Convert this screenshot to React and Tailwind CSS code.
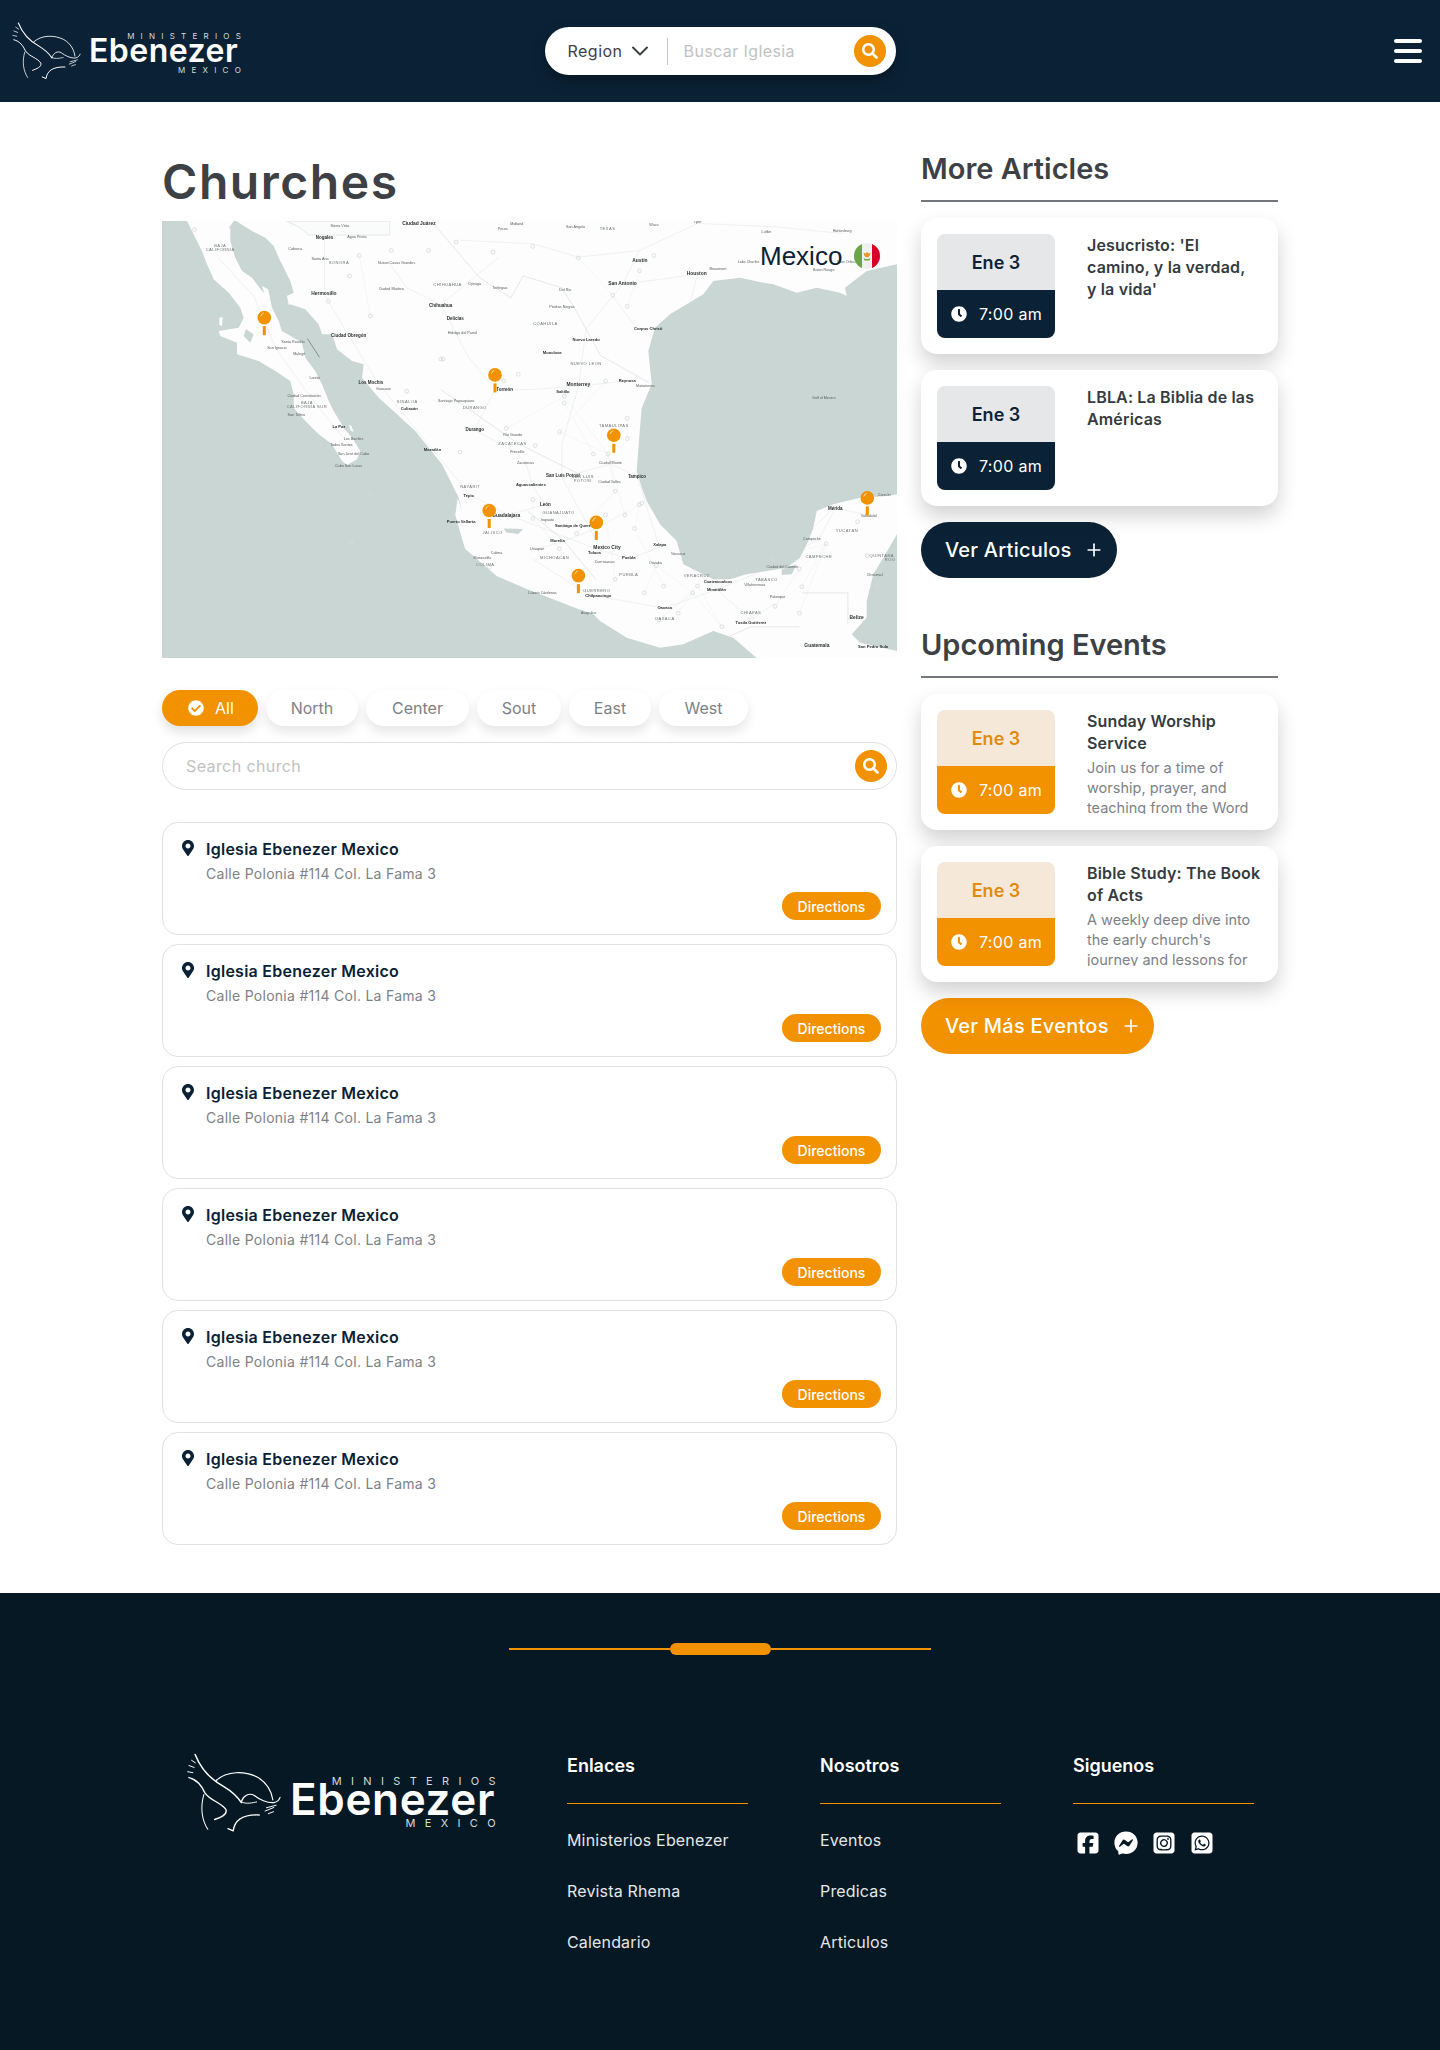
import React from "react";
import { Plus, ChevronDown } from "lucide-react";
import { FaSearch, FaClock, FaCheckCircle, FaMapMarkerAlt } from "react-icons/fa";
import { FaSquareFacebook, FaFacebookMessenger, FaSquareInstagram, FaSquareWhatsapp } from "react-icons/fa6";

const sx = (x) => ((x - 25) / 2.063).toFixed(1);
const sy = (y) => ((y - 243) / 2.95).toFixed(1);
const pts = (a) => a.map(([x, y]) => `${sx(x)},${sy(y)}`).join(" ");
const A = (a) => a.map(([x, y]) => [x / 3, y / 3]);
const B = (a) => a.map(([x, y]) => [438 + x / 3, y / 3]);
const lp = (a) => a.map(([x, y]) => `${x.toFixed(1)},${y.toFixed(1)}`).join(" ");

const baja = A([[75,0],[100,50],[120,90],[135,130],[155,175],[200,215],[235,260],[245,290],[230,320],[170,330],[175,345],[225,365],[225,400],[290,420],[340,450],[385,480],[395,520],[395,560],[430,600],[470,640],[510,670],[540,720],[555,732],[585,715],[595,690],[570,650],[545,620],[515,570],[500,540],[480,490],[460,450],[430,410],[420,365],[360,330],[350,300],[330,260],[325,235],[300,210],[270,170],[240,150],[220,110],[205,60],[205,15],[215,0]]);
const landA = A([[222,0],[270,30],[310,50],[335,75],[350,110],[385,180],[395,215],[375,225],[385,250],[430,265],[470,310],[480,340],[510,340],[525,385],[570,420],[605,430],[600,470],[650,530],[700,575],[760,630],[800,680],[840,730],[890,830],[900,870]]);
const coastMid = [[635,1060],[630,1110],[650,1210],[715,1290],[780,1330],[870,1380]].map(([x, y]) => [(x - 25) / 2.063, (y - 243) / 2.95]);
const coastB = B([[-20,1180],[0,1200],[80,1250],[180,1280],[250,1270],[340,1230],[400,1250],[470,1311],[891,1311],[891,1290],[780,1265],[755,1240],[800,1190],[800,1140],[820,1060],[850,1010],[891,940],[891,820],[860,825],[780,830],[700,850],[650,870],[640,920],[625,960],[600,1010],[560,1040],[500,1050],[440,1060],[390,1075],[340,1075],[290,1050],[250,1030],[230,960],[180,910],[140,840],[125,800],[110,750],[120,620],[125,560],[155,490],[145,390],[165,320],[210,280],[310,220],[340,180],[420,170],[490,185],[520,190],[590,215],[650,200],[720,215],[740,225],[735,200],[800,150],[891,130],[891,0]]);
const land = [...landA, ...coastMid, ...coastB];

const borders = [[[585,250],[680,410],[745,470],[770,405],[850,440],[880,510],[930,640],[1030,720]],[[1345,1340],[1440,1340],[1440,1432]],[[1130,1510],[1240,1440],[1340,1440]],[[780,1100],[850,1180],[920,1300]],[[600,740],[760,900],[900,1000]]];
const roads = [[[360,290],[360,460],[410,580],[470,720],[585,920],[660,1050],[740,1110],[920,1210],[990,1240],[1060,1200],[1170,1330],[1290,1260],[1410,1090]],[[600,490],[630,570],[655,640],[712,740],[790,740],[880,730],[985,715]],[[975,430],[900,560],[885,725],[850,900],[850,1000],[930,1210]],[[1130,400],[975,430],[1010,330],[880,350]],[[712,740],[670,860],[755,925],[775,955],[790,1025],[815,1080],[740,1110]],[[490,360],[530,440],[600,490],[720,350]],[[850,1000],[950,960],[1005,995],[1050,1200]],[[800,1210],[850,1190],[920,1150],[985,1100]],[[1290,1260],[1380,1180],[1415,1090],[1480,1110]],[[140,350],[215,465],[260,620],[330,760],[420,920]],[[790,1240],[905,1345],[1060,1385],[1170,1330],[1240,1420],[1290,1370]],[[1000,560],[1040,560],[1110,510],[1130,400]],[[1010,330],[1130,250],[1290,260],[1430,280]],[[640,300],[790,310],[885,350]],[[955,465],[1005,560]]];
const shields = [[92,268],[168,262],[432,345],[498,330],[575,330],[632,305],[708,335],[790,318],[884,352],[1010,390],[1040,345],[955,462],[985,495],[455,523],[368,480],[412,405],[530,745],[600,650],[730,715],[760,695],[855,760],[940,715],[985,825],[735,855],[845,865],[985,885],[915,930],[945,930],[795,905],[790,1065],[960,1040],[1015,1075],[790,1120],[880,1165],[980,1110],[845,1210],[1045,1260],[1130,1320],[1290,1380],[1345,1322],[1480,1230],[1460,1130],[1395,1195],[1020,1340],[1050,1420],[855,780],[605,650],[700,1265],[1180,1440],[1340,1270],[455,1045],[415,1190],[640,925],[1285,1240],[1010,1080],[1120,1340],[940,1110],[1000,1150],[1090,1400],[960,1300],[1060,1320],[1340,1400],[1500,1320]];
const webLines = [];
shields.forEach(([x, y], i) => {
  [3, 7, 11, 19].forEach((s) => {
    const [u, v] = shields[(i + s) % shields.length];
    const d = Math.hypot((u - x) / 2.063, (v - y) / 2.95);
    if (d < 75) webLines.push([[x, y], [u, v]]);
  });
});
const labels = [
["Ciudad Juárez",555,252,6,1],["Nogales",360,293,5.5,1],["Agua Prieta",427,290,4.5,0],["Sierra Vista",392,257,4.5,0],["Midland",757,253,4.5,0],["Pecos",728,267,4.5,0],["San Angelo",878,262,4.5,0],["TEXAS",944,267,5,2],["Waco",1040,256,4.5,0],["Tyler",1130,245,4.5,0],["Lufkin",1272,275,4.5,0],["Hattiesburg",1428,274,4.5,0],
["BAJA",145,316,5,2],["CALIFORNIA",145,327,5,2],["Ciudad Obregón",410,583,5.5,1],["SONORA",390,367,5,2],["Caborca",300,325,4.5,0],["Santa Ana",351,354,4.5,0],["Nuevo Casas Grandes",509,368,4.5,0],["CHIHUAHUA",614,433,5,2],["Ojinaga",670,428,4.5,0],["Terlingua",722,440,4.5,0],["Hermosillo",359,457,6,1],["Ciudad Madera",498,445,4.5,0],["Chihuahua",600,493,5.5,1],["Delicias",630,531,5.5,1],["Hidalgo del Parral",645,573,4.5,0],["Del Rio",857,446,4.5,0],["Piedras Negras",850,497,4.5,0],["San Antonio",975,428,6,1],["Austin",1011,360,6,1],["Houston",1128,400,6,1],["Corpus Christi",1028,561,5,1],["Beaumont",1172,385,4.5,0],["Lake Charles",1235,365,4.5,0],["Baton Rouge",1390,387,4.5,0],["New Orleans",1440,365,4.5,0],
["COAHUILA",816,548,5,2],["Nuevo Laredo",900,595,5,1],["Monclova",830,632,5,1],["NUEVO LEON",900,666,5,2],["Monterrey",884,727,6,1],["Saltillo",852,748,5,1],["Reynosa",985,716,5,1],["Matamoros",1022,731,4.5,0],
["Santa Rosalía",295,600,4.5,0],["San Ignacio",262,617,4.5,0],["Mulegé",308,635,4.5,0],["Loreto",340,705,4.5,0],["Ciudad Constitución",318,758,4.5,0],["BAJA",324,780,5,2],["CALIFORNIA SUR",324,793,5,2],["San Telmo",302,815,4.5,0],["La Paz",390,850,5,1],["Los Barriles",420,887,4.5,0],["Todos Santos",395,904,4.5,0],["San José del Cabo",420,930,4.5,0],["Cabo San Lucas",410,965,4.5,0],
["Los Mochis",456,721,5.5,1],["Guasave",482,740,4.5,0],["Culiacán",535,798,5,1],["SINALOA",531,777,5,2],["Mazatlán",583,919,5,1],["Durango",670,860,5.5,1],["DURANGO",670,795,5,2],["Torreón",732,740,5.5,1],["Santiago Papasquiaro",632,775,4.5,0],["ZACATECAS",748,901,5,2],["Río Grande",749,875,4.5,0],["Zacatecas",775,957,4.5,0],["Fresnillo",758,925,4.5,0],["Aguascalientes",786,1023,5,1],["NAYARIT",661,1027,5,2],["Tepic",658,1053,5,1],["Puerto Vallarta",642,1132,5,1],["Guadalajara",735,1113,6,1],["JALISCO",707,1163,5,2],["León",816,1080,5.5,1],["GUANAJUATO",843,1105,5,2],["Irapuato",820,1124,4.5,0],["Morelia",841,1188,5,1],["Uruapan",799,1211,4.5,0],["MICHOACÁN",835,1237,5,2],["COLIMA",692,1257,5,2],["Manzanillo",686,1238,4.5,0],["Colima",715,1223,4.5,0],["Lázaro Cárdenas",810,1340,4.5,0],
["San Luis Potosí",852,995,5.5,1],["SAN LUIS",893,999,5,2],["POTOSÍ",893,1011,5,2],["TAMAULIPAS",957,848,5,2],["Ciudad Mante",950,958,4.5,0],["Tampico",1005,997,5.5,1],["Ciudad Valles",948,1014,4.5,0],["Santiago de Querétaro",881,1143,5,1],["Toluca",917,1221,5,1],["Mexico City",943,1207,6,1],["Puebla",988,1238,5,1],["Cuernavaca",938,1248,4.5,0],["Xalapa",1052,1200,5,1],["Veracruz",1090,1225,4.5,0],["Orizaba",1043,1252,4.5,0],["PUEBLA",988,1286,5,2],["GUERRERO",922,1335,5,2],["Chilpancingo",925,1349,5,1],["Oaxaca",1062,1385,5,1],["Acapulco",905,1400,4.5,0],["OAXACA",1062,1417,5,2],["VERACRUZ",1128,1290,5,2],["Coatzacoalcos",1172,1307,5,1],["Minatitlán",1169,1332,5,1],["Villahermosa",1248,1317,4.5,0],["TABASCO",1272,1302,5,2],["CHIAPAS",1240,1398,5,2],["Tuxtla Gutiérrez",1240,1430,5,1],["Palenque",1295,1353,4.5,0],
["Mérida",1414,1092,5.5,1],["YUCATÁN",1438,1158,5,2],["Campeche",1366,1180,4.5,0],["CAMPECHE",1380,1235,5,2],["Ciudad del Carmen",1305,1263,4.5,0],["Belize",1458,1412,6,1],["Guatemala",1376,1495,6,1],["San Pedro Sula",1492,1499,5,1],["QUINTANA",1510,1230,5,2],["ROO",1527,1242,5,2],["Chetumal",1495,1288,4.5,0],["Valladolid",1483,1114,4.5,0],["Cancún",1515,1052,4.5,0],["Gulf of Mexico",1390,765,4.5,0]
];
const pins = [[236,528],[712,697],[957,875],[1480,1060],[700,1097],[921,1132],[884,1289]];

function MapDrawing() {
  return (
    <svg viewBox="0 0 735 437" className="block w-full h-full" style={{ fontFamily: '"Liberation Sans", sans-serif' }}>
      <defs>
        <clipPath id="landclip">
          <polygon points={lp(baja)} />
          <polygon points={lp(land)} />
        </clipPath>
      </defs>
      <rect width="735" height="437" fill="#c9d6d3" />
      <g className="blur-[0.3px]">
        <polygon points={lp(baja)} fill="#fdfdfd" />
        <polygon points={lp(land)} fill="#fdfdfd" />
        <polygon points={lp(A([[252,325],[275,340],[265,365],[245,345]]))} fill="#c9d6d3" />
        <polygon points={lp(A([[172,290],[182,288],[180,315],[172,312]]))} fill="#fdfdfd" />
        <polygon points={lp(A([[375,225],[392,218],[395,245],[380,252]]))} fill="#fdfdfd" />
        <polygon points={lp(A([[300,195],[318,205],[325,232],[310,228]]))} fill="#fdfdfd" />
        <polygon points={lp(A([[560,612],[568,615],[575,632],[566,630]]))} fill="#fdfdfd" />
        <polygon points={lp(B([[545,1045],[590,1030],[575,1060],[545,1062]]))} fill="#c9d6d3" />
        <polygon points={pts([[730,1150],[770,1152],[760,1166],[735,1162]])} fill="#c9d6d3" />
        <g clipPath="url(#landclip)">
          {webLines.map((r, i) => <polyline key={i} points={pts(r)} fill="none" stroke="#f0f1f1" strokeWidth="0.6" />)}
          {roads.map((r, i) => <polyline key={i} points={pts(r)} fill="none" stroke="#e9ebeb" strokeWidth="0.7" />)}
          {borders.map((r, i) => <polyline key={i} points={pts(r)} fill="none" stroke="#dfe3e3" strokeWidth="0.8" />)}
        </g>
        <polygon points={lp(A([[372,0],[410,18],[440,42],[683,42],[683,0]]))} fill="#fafbfb" stroke="#dfe3e3" strokeWidth="0.8" />
        <line x1={sx(325)} y1={sy(590)} x2={sx(350)} y2={sy(645)} stroke="#7d8b88" strokeWidth="0.9" />
        {shields.map(([x, y], i) => <circle key={i} cx={sx(x)} cy={sy(y)} r="1.9" fill="none" stroke="#d5d9d9" strokeWidth="0.8" />)}
        {labels.map(([t, x, y, s, k], i) => (
          <text key={i} x={sx(x)} y={sy(y)} fontSize={s * 0.82} textAnchor="middle" dominantBaseline="middle" letterSpacing={k === 2 ? 0.45 : 0} fill={k === 1 ? "#2b2f31" : k === 2 ? "#6f7575" : "#565b5c"} fontWeight={k === 1 ? 700 : 400}>{t}</text>
        ))}
      </g>
      {pins.map(([x, y], i) => {
        const cx = Number(sx(x)); const cy = Number(sy(y));
        return (
          <g key={i}>
            <rect x={cx - 1.5} y={cy + 8.5} width="3" height="9" fill="#f39200" />
            <circle cx={cx} cy={cy} r="6.8" fill="#f39200" />
            <path d={`M${cx - 3.6} ${cy - 1.2} Q${cx - 3} ${cy - 3.8} ${cx - 0.6} ${cy - 4.6}`} fill="none" stroke="#fff" strokeWidth="0.7" />
          </g>
        );
      })}
    </svg>
  );
}

function Eagle({ className }) {
  return (
    <svg viewBox="78 398 292 245" className={className} fill="none" stroke="#fff" strokeLinecap="round" strokeLinejoin="round">
      <path d="M103 402C120 445 150 478 190 500C215 515 232 530 245 550" strokeWidth="4.6" />
      <path d="M84 473C110 480 122 497 133 520C150 545 185 550 198 572C202 588 180 596 163 602" strokeWidth="4.2" />
      <path d="M168 482C200 452 255 452 295 472C325 490 338 515 342 542" strokeWidth="3.6" />
      <path d="M245 548C250 530 268 518 285 528C300 540 325 552 345 550C355 548 362 540 364 534" strokeWidth="3.6" />
      <path d="M245 548C262 556 280 550 292 548" strokeWidth="3" />
      <path d="M130 525C118 565 124 605 142 632" strokeWidth="3.2" />
      <path d="M204 630L220 637C224 605 248 586 300 588" strokeWidth="4.2" />
      <path d="M318 576L345 565M328 584L344 578M322 566L352 558" strokeWidth="3" />
      <path d="M92 420L104 428M84 436L100 442M80 455L96 458" strokeWidth="3" />
    </svg>
  );
}

function ScheduleCard({ orange, title, desc }) {
  return (
    <div className="h-[136px] bg-white rounded-2xl shadow-[0_10px_20px_rgba(0,0,0,0.18)] p-4 flex gap-8">
      <div className="w-[118px] h-[104px] shrink-0 rounded-lg overflow-hidden flex flex-col">
        <div className={orange ? "h-14 bg-[#f5e8d8] text-[#e28a0e] flex items-center justify-center text-[18px] font-semibold" : "h-14 bg-[#e6e7e9] text-[#0b2236] flex items-center justify-center text-[18px] font-semibold"}>Ene 3</div>
        <div className={orange ? "h-12 bg-[#f39200] text-white flex items-center gap-3 pl-[14px] text-[16px] tracking-[0.02em]" : "h-12 bg-[#0b2236] text-white flex items-center gap-3 pl-[14px] text-[16px] tracking-[0.02em]"}>
          <FaClock size={16} />
          <span>7:00 am</span>
        </div>
      </div>
      <div className="h-[104px] overflow-hidden flex-1 min-w-0">
        <div className="text-[16px] leading-[22px] font-semibold text-[#353b3f] tracking-[0.01em]">{title}</div>
        {desc && <div className="text-[14.5px] leading-5 text-[#7d8286] mt-[4px]">{desc}</div>}
      </div>
    </div>
  );
}

function ChurchCard() {
  return (
    <div className="h-[113px] rounded-2xl border border-[#dfe1e3] pt-[14px] pb-[14px] pl-[17px] pr-[15px] flex flex-col">
      <div className="flex gap-[10px]">
        <FaMapMarkerAlt className="text-[#0b2236] mt-[3px] shrink-0" size={16} />
        <div>
          <div className="text-[16px] leading-6 font-semibold text-[#0b2236] tracking-[0.016em]">Iglesia Ebenezer Mexico</div>
          <div className="text-[14px] leading-5 mt-[3px] text-[#7d8286] tracking-[0.02em]">Calle Polonia #114 Col. La Fama 3</div>
        </div>
      </div>
      <button className="mt-auto self-end w-[99px] h-7 rounded-full bg-[#f39200] text-white text-[14px] font-medium">Directions</button>
    </div>
  );
}

const navBar = "w-[28px] h-[4px] rounded-sm bg-white";

export default function App() {
  return (
    <div className="w-full min-h-[2050px] bg-white flex flex-col font-['Inter',sans-serif]">
      <header className="h-[102px] bg-[#0b2236] grid grid-cols-[1fr_auto_1fr] items-center">
        <div className="flex items-center gap-[7px] pl-3">
          <Eagle className="w-[70px] h-[58px] shrink-0" />
          <div className="w-[152px] text-right text-white mt-[3px]">
            <div className="text-[8px] leading-[8px] tracking-[0.78em] mr-[-6px] text-[#d5dade]">MINISTERIOS</div>
            <div className="text-[32px] leading-[28px] font-semibold tracking-[0.015em] text-left mt-[-3px]">Ebenezer</div>
            <div className="text-[8px] leading-[8px] tracking-[0.78em] mr-[-6px] mt-[1px] text-[#d5dade]">MEXICO</div>
          </div>
        </div>
        <div className="w-[351px] h-12 bg-white rounded-full shadow-[0_6px_14px_rgba(0,0,0,0.35)] flex items-center pl-[23px] pr-[10px]">
          <span className="text-[16px] text-[#3d4145] tracking-[0.03em]">Region</span>
          <ChevronDown className="ml-[3px] text-[#3d4145]" size={28} strokeWidth={1.7} />
          <div className="w-px h-[27px] bg-[#c9c9c9] ml-[13px]" />
          <span className="ml-4 text-[16px] text-[#c2c2c2] tracking-[0.025em]">Buscar Iglesia</span>
          <div className="ml-auto w-8 h-8 rounded-full bg-[#f39200] flex items-center justify-center text-white"><FaSearch size={16} /></div>
        </div>
        <div className="justify-self-end pr-[18px] flex flex-col gap-[6px]">
          <div className={navBar} />
          <div className={navBar} />
          <div className={navBar} />
        </div>
      </header>

      <main className="w-[1116px] mx-auto flex gap-6 pt-[38px] pb-12">
        <div className="w-[735px] shrink-0">
          <h1 className="mt-[6px] text-[48px] leading-[72px] font-semibold text-[#3d4145] tracking-[0.032em] mb-[3px]">Churches</h1>
          <div className="relative h-[437px] overflow-hidden">
            <MapDrawing />
            <div className="absolute top-[20px] left-[598px] flex items-center gap-3">
              <span className="text-[26px] leading-[30px] text-[#0b2236] font-['Liberation_Sans',sans-serif]">Mexico</span>
              <svg viewBox="0 0 26 26" className="w-[26px] h-[26px]">
                <defs><clipPath id="flagc"><circle cx="13" cy="13" r="13" /></clipPath></defs>
                <g clipPath="url(#flagc)">
                  <rect width="26" height="26" fill="#f0f0f0" />
                  <rect width="8" height="26" fill="#6da544" />
                  <rect x="18" width="8" height="26" fill="#d80027" />
                  <path d="M9.5 9.5l2 1 1.5-1.5 1.5 1.5 2-1-.7 3-1.3 1.8h-3l-1.3-1.8z" fill="#e59a2c" />
                  <path d="M9.5 14.5c1 2 6 2 7 0l-1 3h-5z" fill="#6da544" />
                </g>
              </svg>
            </div>
          </div>
          <div className="flex gap-2 mt-8">
            <div className="w-[96px] h-9 rounded-full bg-[#f39200] text-white shadow-[0_6px_12px_rgba(0,0,0,0.12)] flex items-center pl-[26px] gap-[11px] text-[16px]"><FaCheckCircle size={16} /><span>All</span></div>
            <div className="w-[92px] h-9 rounded-full bg-white text-[#7d8286] shadow-[0_6px_12px_rgba(0,0,0,0.1)] flex items-center justify-center text-[16px]">North</div>
            <div className="w-[103px] h-9 rounded-full bg-white text-[#7d8286] shadow-[0_6px_12px_rgba(0,0,0,0.1)] flex items-center justify-center text-[16px]">Center</div>
            <div className="w-[84px] h-9 rounded-full bg-white text-[#7d8286] shadow-[0_6px_12px_rgba(0,0,0,0.1)] flex items-center justify-center text-[16px]">Sout</div>
            <div className="w-[82px] h-9 rounded-full bg-white text-[#7d8286] shadow-[0_6px_12px_rgba(0,0,0,0.1)] flex items-center justify-center text-[16px]">East</div>
            <div className="w-[89px] h-9 rounded-full bg-white text-[#7d8286] shadow-[0_6px_12px_rgba(0,0,0,0.1)] flex items-center justify-center text-[16px]">West</div>
          </div>
          <div className="mt-4 h-12 rounded-full border border-[#dfe1e3] flex items-center pl-[23px] pr-[9px]">
            <span className="text-[16px] text-[#c2c2c2] tracking-[0.025em]">Search church</span>
            <div className="ml-auto w-8 h-8 rounded-full bg-[#f39200] flex items-center justify-center text-white"><FaSearch size={16} /></div>
          </div>
          <div className="mt-8 flex flex-col gap-[9px]">
            <ChurchCard /><ChurchCard /><ChurchCard /><ChurchCard /><ChurchCard /><ChurchCard />
          </div>
        </div>

        <aside className="w-[357px] shrink-0">
          <h2 className="h-[62px] leading-[58px] border-b-2 border-[#73777b] text-[29px] font-semibold text-[#3d4145]">More Articles</h2>
          <div className="mt-4 flex flex-col gap-4">
            <ScheduleCard title={<>Jesucristo: 'El<br />camino, y la verdad,<br />y la vida'</>} />
            <ScheduleCard title="LBLA: La Biblia de las Américas" />
          </div>
          <button className="mt-4 h-14 w-[196px] rounded-full bg-[#0b2236] text-white flex items-center pl-6 gap-3 text-[20px] font-medium tracking-[0.012em]">Ver Articulos <Plus size={20} /></button>
          <h2 className="mt-[38px] h-[62px] leading-[58px] border-b-2 border-[#73777b] text-[29px] font-semibold text-[#3d4145]">Upcoming Events</h2>
          <div className="mt-4 flex flex-col gap-4">
            <ScheduleCard orange title="Sunday Worship Service" desc="Join us for a time of worship, prayer, and teaching from the Word" />
            <ScheduleCard orange title="Bible Study: The Book of Acts" desc="A weekly deep dive into the early church's journey and lessons for today" />
          </div>
          <button className="mt-4 h-14 w-[233px] rounded-full bg-[#f39200] text-white flex items-center pl-6 gap-3 text-[20px] font-medium tracking-[0.012em]">Ver Más Eventos <Plus size={20} /></button>
        </aside>
      </main>

      <footer className="flex-1 bg-[#061824] pt-[50px] pb-[60px]">
        <div className="w-[422px] mx-auto flex items-center">
          <div className="flex-1 h-[2px] bg-[#f39200]" />
          <div className="w-[101px] h-3 rounded-md bg-[#f39200]" />
          <div className="flex-1 h-[2px] bg-[#f39200]" />
        </div>
        <div className="flex mt-[97px] pl-[187px]">
          <div className="w-[309px] flex gap-[8px] items-start mt-px shrink-0">
            <Eagle className="w-[95px] h-[80px] shrink-0" />
            <div className="w-[206px] text-right text-white mt-[23px]">
              <div className="text-[11px] leading-[11px] tracking-[0.85em] mr-[-9px] text-[#d5dade]">MINISTERIOS</div>
              <div className="text-[44px] leading-[36px] font-semibold tracking-[0.015em] text-left mt-[-6px]">Ebenezer</div>
              <div className="text-[11px] leading-[11px] tracking-[0.85em] mr-[-9px] mt-[1px] text-[#d5dade]">MEXICO</div>
            </div>
          </div>
          <div className="w-[181px] ml-[71px] shrink-0">
            <div className="text-[18px] leading-7 font-semibold text-white">Enlaces</div>
            <div className="mt-[23px] h-px bg-[#f39200]" />
            <div className="mt-[24px] flex flex-col gap-[27px] text-[16px] leading-6 text-[#e4e7e9] tracking-[0.01em]">
              <span>Ministerios Ebenezer</span><span>Revista Rhema</span><span>Calendario</span>
            </div>
          </div>
          <div className="w-[181px] ml-[72px] shrink-0">
            <div className="text-[18px] leading-7 font-semibold text-white">Nosotros</div>
            <div className="mt-[23px] h-px bg-[#f39200]" />
            <div className="mt-[24px] flex flex-col gap-[27px] text-[16px] leading-6 text-[#e4e7e9] tracking-[0.01em]">
              <span>Eventos</span><span>Predicas</span><span>Articulos</span>
            </div>
          </div>
          <div className="w-[181px] ml-[72px] shrink-0">
            <div className="text-[18px] leading-7 font-semibold text-white">Siguenos</div>
            <div className="mt-[23px] h-px bg-[#f39200]" />
            <div className="mt-[27px] flex gap-[14px] pl-[3px] text-white">
              <FaSquareFacebook size={24} /><FaFacebookMessenger size={24} /><FaSquareInstagram size={24} /><FaSquareWhatsapp size={24} />
            </div>
          </div>
        </div>
      </footer>
    </div>
  );
}
